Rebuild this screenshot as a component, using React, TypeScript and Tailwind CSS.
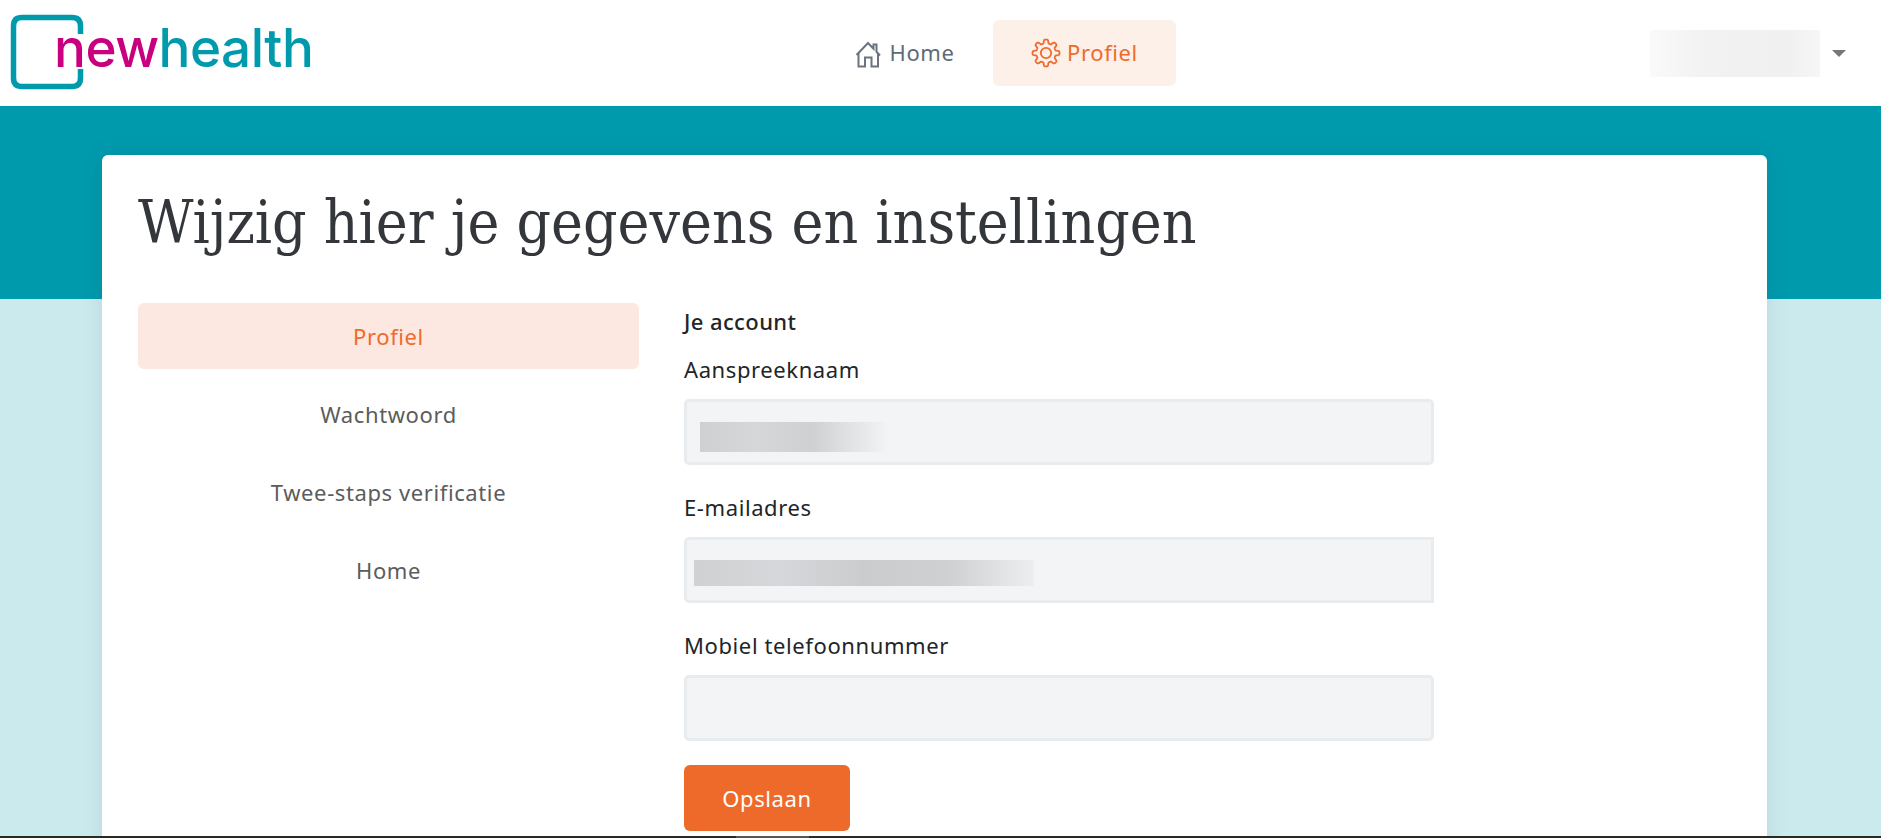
const body = { fontFamily: '"Noto Sans", "Open Sans", sans-serif' }

// gear outline with 8 rounded teeth
const gearPath = (() => {
  const pts: string[] = []
  for (let i = 0; i < 240; i++) {
    const a = (i / 240) * Math.PI * 2
    const r = 11.6 + 1.9 * Math.tanh(2.4 * Math.cos(a * 8))
    pts.push(`${(15 + r * Math.sin(a)).toFixed(2)} ${(15 - r * Math.cos(a)).toFixed(2)}`)
  }
  return `M${pts.join("L")}Z`
})()

function HomeIcon() {
  return (
    <svg className="mt-[4px]" width="27" height="27" viewBox="0 0 27 27" fill="none" stroke="#6b7580" strokeWidth="2">
      <path d="M1.5 14 L13 2 L18.5 7.7 V3.5 H21.5 V10.8 L25 14.5" />
      <path d="M3.5 12 V25.5 H10 V16.5 H16.5 V25.5 H23 V12" />
    </svg>
  )
}

function GearIcon() {
  return (
    <svg className="mt-[2px]" width="30" height="30" viewBox="0 0 30 30" fill="none" stroke="#ee6b2b" strokeWidth="1.8">
      <path d={gearPath} strokeLinejoin="round" />
      <circle cx="15" cy="15" r="5.2" />
    </svg>
  )
}

function Logo() {
  return (
    <div className="relative h-[106px] w-[330px] shrink-0">
      <svg className="absolute left-0 top-0" width="90" height="106" viewBox="0 0 90 106" fill="none">
        <path
          d="M80.5 34 V26 Q80.5 17.5 72 17.5 H22 Q13.5 17.5 13.5 26 V78 Q13.5 86.5 22 86.5 H72 Q80.5 86.5 80.5 78 V69"
          stroke="#009aad"
          strokeWidth="5.5"
        />
      </svg>
      <div
        className="absolute left-[54px] top-[16px] text-[53px] font-medium leading-[64px] tracking-[-0.5px]"
        style={{ fontFamily: "Inter, sans-serif" }}
      >
        <span className="text-[#c8007f]">new</span>
        <span className="text-[#009aad]">health</span>
      </div>
    </div>
  )
}

function Field({ label, inputClass, children }: { label: string; inputClass?: string; children?: React.ReactNode }) {
  return (
    <div>
      <label className="mb-[16px] block text-[22px] leading-[28px] tracking-[0.6px] text-[#212529]">{label}</label>
      <div className={`flex h-[66px] items-center border-[3px] border-[#e9ecef] bg-[#f3f4f6] ${inputClass ?? "rounded-[5px]"}`}>
        {children}
      </div>
    </div>
  )
}

export default function App() {
  const menu = ["Wachtwoord", "Twee-staps verificatie", "Home"]

  return (
    <div className="flex h-[838px] flex-col overflow-hidden bg-white" style={body}>
      <header className="flex h-[106px] shrink-0 items-center bg-white">
        <Logo />
        <nav className="ml-[490px] flex items-center">
          <a className="flex h-[66px] w-[169px] items-center justify-center gap-[8px] pb-[2px] text-[22px] tracking-[0.6px] text-[#5f6b76]">
            <HomeIcon />
            Home
          </a>
          <a className="ml-[4px] flex h-[66px] w-[183px] items-center justify-center gap-[6px] rounded-[6px] bg-[#fdf0e9] pb-[2px] text-[22px] tracking-[0.6px] text-[#ee6b2b]">
            <GearIcon />
            Profiel
          </a>
        </nav>
        <div className="ml-auto mr-[35px] flex items-center gap-[12px]">
          <div className="h-[47px] w-[170px] bg-[linear-gradient(90deg,#fafafa,#f2f2f2_30%,#f0f0f0_80%,#f6f6f6)]" />
          <div className="h-0 w-0 border-x-[7px] border-t-[7px] border-x-transparent border-t-[#777]" />
        </div>
      </header>

      <main className="min-h-0 flex-1 overflow-hidden bg-[linear-gradient(#009aad_193px,#cbeaed_193px)] pl-[102px] pr-[114px] pt-[49px]">
        <div className="h-[800px] rounded-t-[6px] bg-white px-[36px] pt-[27px] shadow-[0_0_24px_rgba(0,0,0,0.08)]">
          <h1
            className="text-[60px] leading-[80px] text-[#33363b]"
            style={{ fontFamily: '"DejaVu Serif Condensed", "DejaVu Serif", serif', fontStretch: "condensed" }}
          >
            Wijzig hier je gegevens en instellingen
          </h1>
          <div className="mt-[41px] flex gap-[45px]">
            <aside className="flex w-[501px] shrink-0 flex-col gap-[12px] text-[22px] tracking-[0.6px]">
              <a className="flex h-[66px] items-center justify-center rounded-[6px] bg-[#fce8e0] text-[#ee6b2b]">
                Profiel
              </a>
              {menu.map((item) => (
                <a key={item} className="flex h-[66px] items-center justify-center text-[#5c5c5c]">
                  {item}
                </a>
              ))}
            </aside>
            <form className="w-[750px]">
              <h2 className="mt-[3px] text-[22px] font-medium leading-[30px] tracking-[0.4px] text-[#212529]">Je account</h2>
              <div className="mt-[19px] flex flex-col gap-[28px]">
                <Field label="Aanspreeknaam">
                  <div className="ml-[13px] mt-[10px] h-[30px] w-[185px] bg-[linear-gradient(90deg,#cfd0d2,#d6d7d9_30%,#cfd0d2_60%,#f1f2f4)]" />
                </Field>
                <Field label="E-mailadres" inputClass="rounded-l-[5px]">
                  <div className="ml-[7px] mt-[6px] h-[26px] w-[340px] bg-[linear-gradient(90deg,#d0d1d3,#d6d7da_25%,#cbccce_50%,#cfd0d2_75%,#eceef0)]" />
                </Field>
                <Field label="Mobiel telefoonnummer" />
              </div>
              <button
                type="button"
                className="mt-[24px] h-[66px] w-[166px] rounded-[6px] bg-[#ed6a2a] text-[22px] tracking-[0.6px] text-white"
              >
                Opslaan
              </button>
            </form>
          </div>
        </div>
      </main>

      <div className="flex h-[2px] shrink-0 bg-[#2c2a20]">
        <div className="ml-[736px] w-[73px] bg-[#5a5850]" />
      </div>
    </div>
  )
}
